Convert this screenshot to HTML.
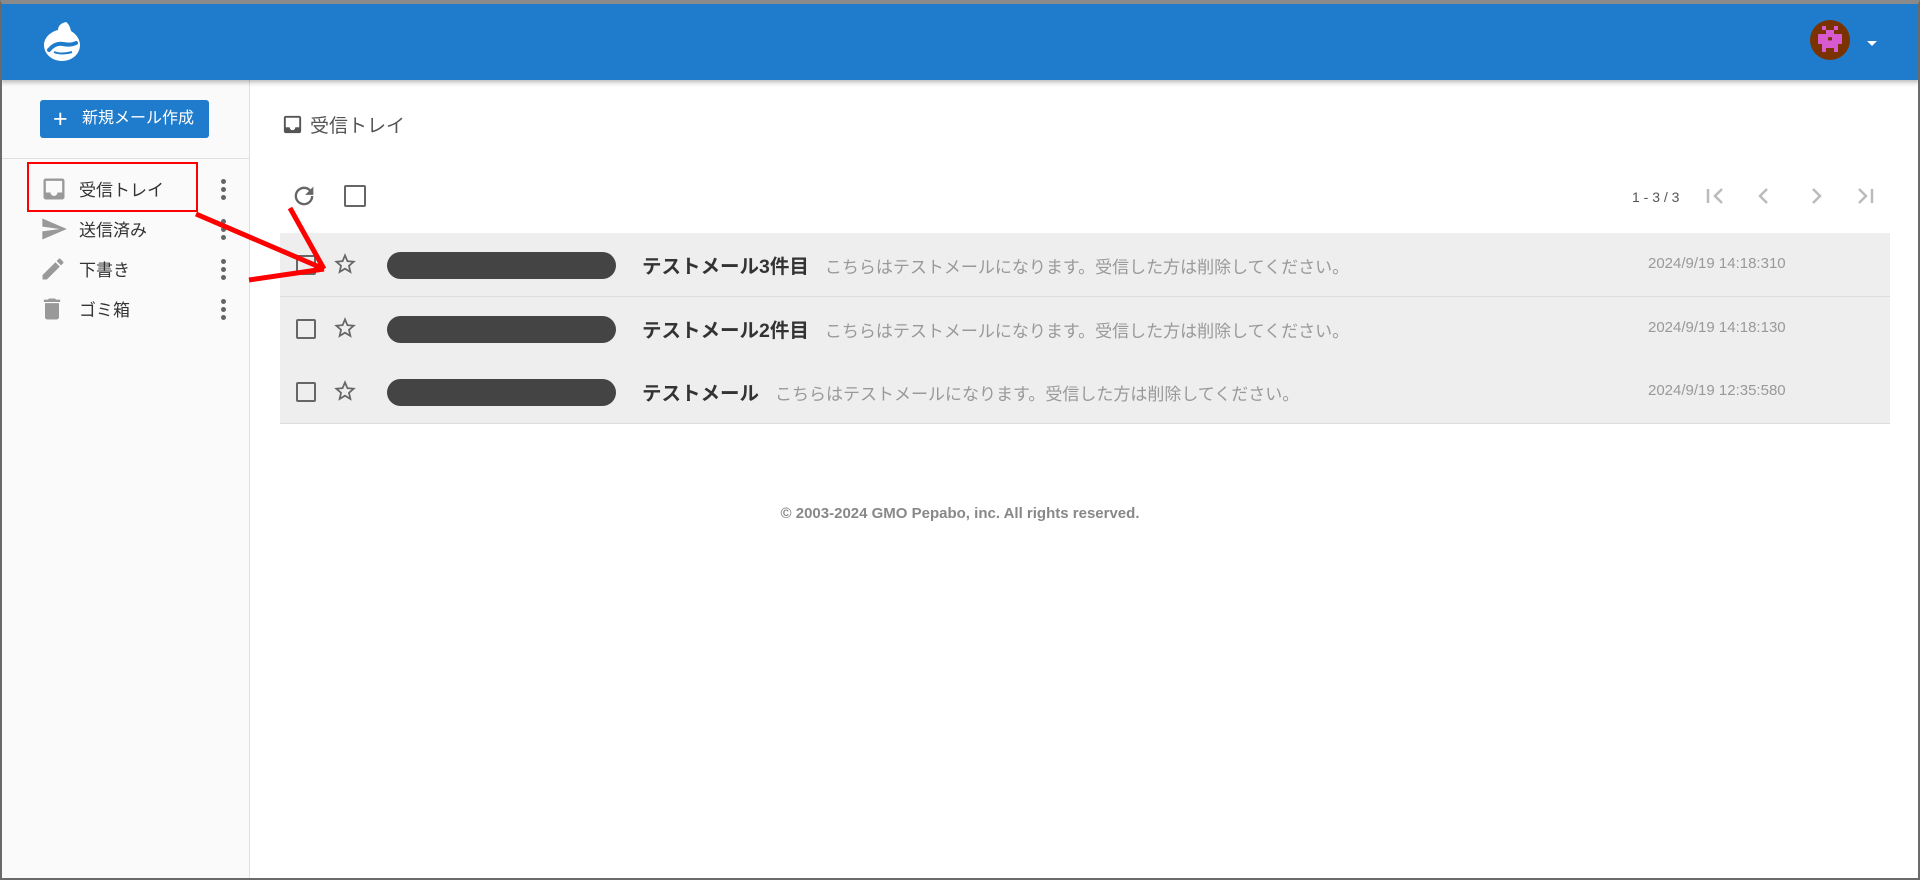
<!DOCTYPE html>
<html><head><meta charset="utf-8"><style>
*{margin:0;padding:0;box-sizing:border-box}
body{width:1920px;height:880px;overflow:hidden;background:#fff;font-family:"Liberation Sans","Noto Sans CJK JP",sans-serif;position:relative}
.frame{position:absolute;inset:0;border:2px solid #6a6a6a;border-top:4px solid #8a8a8a;pointer-events:none;z-index:10}
.hdr{position:absolute;left:0;top:4px;width:1920px;height:76px;background:#1f7bcb;box-shadow:0 2px 5px rgba(0,0,0,.3);z-index:2}
.side{position:absolute;left:0;top:80px;width:250px;height:800px;background:#fafafa;border-right:1px solid #e0e0e0}
.btn{position:absolute;left:40px;top:100px;width:169px;height:38px;background:#1f7bcb;border-radius:3px;color:#fff;font-size:16px;line-height:38px;padding-left:42px}
.btn span{position:absolute;left:13px;top:0;font-size:25px;font-weight:300}
.div{position:absolute;left:0;top:158px;width:250px;border-top:1px solid #e0e0e0}
.item{position:absolute;left:79px;font-size:17px;color:#333}
.dots{position:absolute;left:221px;width:5px}
.dots i{display:block;width:5px;height:5px;border-radius:50%;background:#666;margin-bottom:3px}
.row{position:absolute;left:280px;width:1610px;height:64px;background:#eee;border-bottom:1px solid #ddd}
.cb{position:absolute;left:16px;top:22px;width:20px;height:20px;border:2.5px solid #666;border-radius:2px}
.star{position:absolute;left:52px;top:18px}
.pill{position:absolute;left:107px;top:19px;width:229px;height:27px;border-radius:14px;background:#444}
.subj{position:absolute;left:362px;top:17px;font-size:19.5px;font-weight:bold;color:#333;white-space:nowrap}
.subj em{font-style:normal;font-weight:normal;color:#999;font-size:17px;margin-left:16px}
.date{position:absolute;left:1368px;top:22px;font-size:15px;color:#999}
</style></head><body>
<div class="hdr">
<svg style="position:absolute;left:42px;top:16px" width="40" height="44" viewBox="0 0 40 44"><path d="M24 2c-5 1-8 4-8 8C8 12 2 18 2 25c0 9 8 16 18 16s18-7 18-16c0-6-4-11-9-14-1-4-2-7-5-9z" fill="#fff"/><path d="M7 30c4-5 9-7 14-6 5 1 9 1 13-1" stroke="#1f7bcb" stroke-width="4" fill="none" stroke-linecap="round"/><path d="M12 32c5 2 12 2 18 0" stroke="#1f7bcb" stroke-width="2" fill="none"/></svg>
<svg style="position:absolute;left:1810px;top:16px" width="40" height="40" viewBox="0 0 10 10"><circle cx="5" cy="5" r="5" fill="#7a3300"/><g fill="#d85ad0"><rect x="3" y="1.5" width="1" height="1"/><rect x="6" y="1.5" width="1" height="1"/><rect x="4" y="2.5" width="2" height="1"/><rect x="2" y="3.5" width="6" height="2.5"/><rect x="3" y="6" width="4" height="1"/><rect x="3" y="7" width="1" height="1"/><rect x="6" y="7" width="1" height="1"/></g><rect x="4.5" y="4.3" width="1" height="0.8" fill="#7a3300"/></svg>
<div style="position:absolute;left:1867px;top:37px;border-left:5px solid transparent;border-right:5px solid transparent;border-top:5px solid #fff"></div>
</div>
<div class="side"></div>
<div class="btn"><span>+</span>新規メール作成</div>
<div class="div"></div>
<svg style="position:absolute;left:40px;top:175px" width="28" height="28" viewBox="0 0 24 24"><path d="M19 3H5c-1.1 0-2 .9-2 2v14c0 1.1.9 2 2 2h14c1.1 0 2-.9 2-2V5c0-1.1-.9-2-2-2zm0 12h-4c0 1.66-1.35 3-3 3s-3-1.34-3-3H5V5h14v10z" fill="#999"/><path d="M5 15h4c0 1.66 1.35 3 3 3s3-1.34 3-3h4v4H5z" fill="#999"/></svg>
<div class="item" style="top:176px">受信トレイ</div>
<svg style="position:absolute;left:39px;top:215px" width="30" height="28" viewBox="0 0 24 24"><path d="M2 21l21-9L2 3v7l15 2-15 2z" fill="#999"/></svg>
<div class="item" style="top:216px">送信済み</div>
<svg style="position:absolute;left:39px;top:255px" width="28" height="28" viewBox="0 0 24 24"><path d="M3 17.25V21h3.75L17.81 9.94l-3.75-3.75L3 17.25zM20.71 7.04a1 1 0 000-1.41l-2.34-2.34a1 1 0 00-1.41 0l-1.83 1.83 3.75 3.75 1.83-1.83z" fill="#999"/></svg>
<div class="item" style="top:256px">下書き</div>
<svg style="position:absolute;left:38px;top:294px" width="28" height="30" viewBox="0 0 24 24"><path d="M6 19c0 1.1.9 2 2 2h8c1.1 0 2-.9 2-2V7H6v12zM19 4h-3.5l-1-1h-5l-1 1H5v2h14V4z" fill="#999"/></svg>
<div class="item" style="top:296px">ゴミ箱</div>
<div class="dots" style="top:179px"><i></i><i></i><i></i></div>
<div class="dots" style="top:219px"><i></i><i></i><i></i></div>
<div class="dots" style="top:259px"><i></i><i></i><i></i></div>
<div class="dots" style="top:299px"><i></i><i></i><i></i></div>

<svg style="position:absolute;left:281px;top:113px" width="23" height="23" viewBox="0 0 24 24"><path d="M19 3H5c-1.1 0-2 .9-2 2v14c0 1.1.9 2 2 2h14c1.1 0 2-.9 2-2V5c0-1.1-.9-2-2-2zm0 12h-4c0 1.66-1.35 3-3 3s-3-1.34-3-3H5V5h14v10z" fill="#555"/><path d="M5 15h4c0 1.66 1.35 3 3 3s3-1.34 3-3h4v4H5z" fill="#555"/></svg>
<div style="position:absolute;left:310px;top:111px;font-size:19px;color:#555">受信トレイ</div>

<svg style="position:absolute;left:290px;top:182px" width="28" height="28" viewBox="0 0 24 24"><path d="M17.65 6.35A7.96 7.96 0 0012 4a8 8 0 108 8h-2a6 6 0 11-1.76-4.24L13 11h7V4l-2.35 2.35z" fill="#666"/></svg>
<div style="position:absolute;left:344px;top:185px;width:22px;height:22px;border:2.5px solid #666;border-radius:2px"></div>

<div style="position:absolute;left:1632px;top:189px;font-size:14px;color:#555">1 - 3 / 3</div>
<svg style="position:absolute;left:1700px;top:182px" width="200" height="28" viewBox="0 0 200 28" fill="none" stroke="#bbb" stroke-width="2.5"><path d="M8 7v14M22 7l-7 7 7 7"/><path d="M67 7l-7 7 7 7"/><path d="M113 7l7 7-7 7"/><path d="M159 7l7 7-7 7M172 7v14"/></svg>

<div class="row" style="top:233px"><div class="cb"></div><svg class="star" width="26" height="26" viewBox="0 0 24 24"><path d="M22 9.24l-7.19-.62L12 2 9.19 8.63 2 9.24l5.46 4.73L5.82 21 12 17.27 18.18 21l-1.63-7.03L22 9.24zM12 15.4l-3.76 2.27 1-4.28-3.32-2.88 4.38-.38L12 6.1l1.71 4.04 4.38.38-3.32 2.88 1 4.28L12 15.4z" fill="#666"/></svg><div class="pill"></div><div class="subj">テストメール3件目<em>こちらはテストメールになります。受信した方は削除してください。</em></div><div class="date">2024/9/19 14:18:310</div></div>
<div class="row" style="top:297px"><div class="cb"></div><svg class="star" width="26" height="26" viewBox="0 0 24 24"><path d="M22 9.24l-7.19-.62L12 2 9.19 8.63 2 9.24l5.46 4.73L5.82 21 12 17.27 18.18 21l-1.63-7.03L22 9.24zM12 15.4l-3.76 2.27 1-4.28-3.32-2.88 4.38-.38L12 6.1l1.71 4.04 4.38.38-3.32 2.88 1 4.28L12 15.4z" fill="#666"/></svg><div class="pill"></div><div class="subj">テストメール2件目<em>こちらはテストメールになります。受信した方は削除してください。</em></div><div class="date">2024/9/19 14:18:130</div></div>
<div class="row" style="top:360px"><div class="cb"></div><svg class="star" width="26" height="26" viewBox="0 0 24 24"><path d="M22 9.24l-7.19-.62L12 2 9.19 8.63 2 9.24l5.46 4.73L5.82 21 12 17.27 18.18 21l-1.63-7.03L22 9.24zM12 15.4l-3.76 2.27 1-4.28-3.32-2.88 4.38-.38L12 6.1l1.71 4.04 4.38.38-3.32 2.88 1 4.28L12 15.4z" fill="#666"/></svg><div class="pill"></div><div class="subj">テストメール<em>こちらはテストメールになります。受信した方は削除してください。</em></div><div class="date">2024/9/19 12:35:580</div></div>

<div style="position:absolute;left:0;width:1920px;text-align:center;top:505px;font-size:15px;font-weight:bold;color:#888">© 2003-2024 GMO Pepabo, inc. All rights reserved.</div>

<div style="position:absolute;left:27px;top:162px;width:171px;height:50px;border:2px solid #f00;z-index:5"></div>
<svg style="position:absolute;left:0;top:0;z-index:6" width="400" height="300"><g stroke="#f00" stroke-width="5" fill="none"><path d="M196 214L324 269"/><path d="M290 208L324 269"/><path d="M249 280L324 269"/></g></svg>
<div class="frame"></div>
</body></html>
